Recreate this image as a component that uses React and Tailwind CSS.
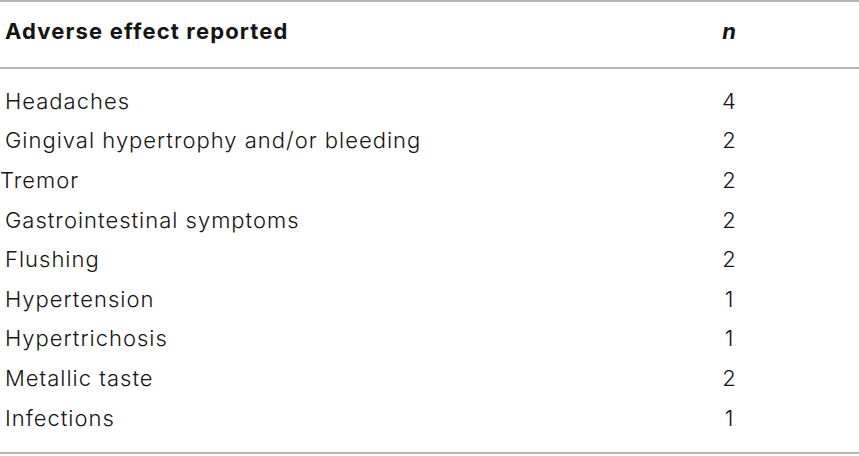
const rows = [
  { effect: 'Headaches', n: 4 },
  { effect: 'Gingival hypertrophy and/or bleeding', n: 2 },
  { effect: 'Tremor', n: 2, flush: true },
  { effect: 'Gastrointestinal symptoms', n: 2 },
  { effect: 'Flushing', n: 2 },
  { effect: 'Hypertension', n: 1 },
  { effect: 'Hypertrichosis', n: 1 },
  { effect: 'Metallic taste', n: 2 },
  { effect: 'Infections', n: 1 },
];

export default function App() {
  return (
    <div
      className="w-[859px] h-[456px] bg-white text-[#141414]"
      style={{ fontFamily: 'Inter, "Liberation Sans", sans-serif' }}
    >
      <div className="border-t-2 border-[#b4b4b4]">
        <div className="flex h-[67px] items-start pt-[16px] border-b-2 border-[#b4b4b4] text-[22px] leading-[26px] font-bold">
          <div className="flex-1 pl-[5px] tracking-[1.15px]">Adverse effect reported</div>
          <div className="w-[60px] mr-[100px] text-center italic">n</div>
        </div>
        <div className="pt-[12px] pb-[15px] border-b-2 border-[#b4b4b4]">
          {rows.map((r) => (
            <div key={r.effect} className="flex h-[39.6px] items-center text-[22px] leading-[26px] font-light">
              <div className={r.flush ? 'flex-1 pl-0 tracking-[1px]' : 'flex-1 pl-[5px] tracking-[1px]'}>{r.effect}</div>
              <div className="w-[60px] mr-[100px] text-center">{r.n}</div>
            </div>
          ))}
        </div>
      </div>
    </div>
  );
}
